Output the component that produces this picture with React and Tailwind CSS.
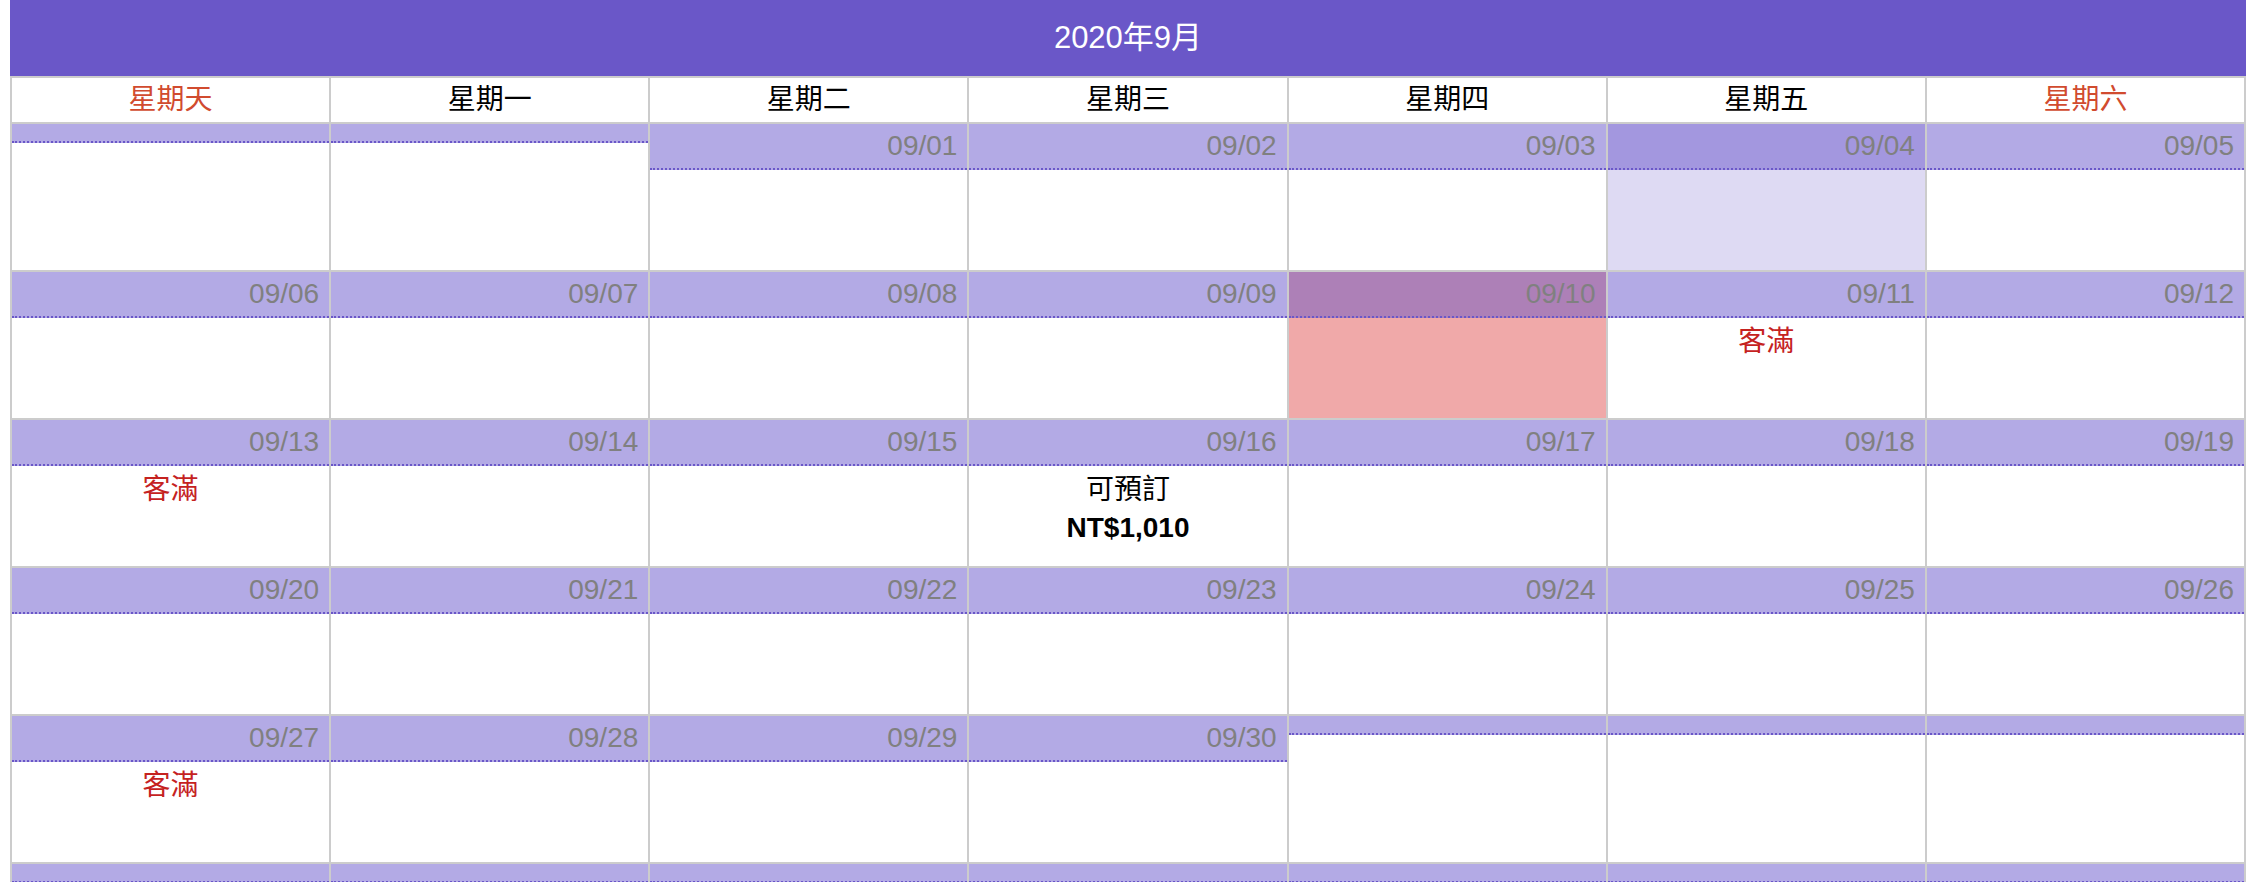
import React from "react";

const WEEKDAYS = ["星期天", "星期一", "星期二", "星期三", "星期四", "星期五", "星期六"];

// special days in the month
const DAY_INFO = {
  4: { band: "bg-[#a397df]", body: "bg-[#dedaf3]" },
  10: { band: "bg-[#ad80b7]", body: "bg-[#f0a9a9]" },
  11: { status: "full" },
  13: { status: "full" },
  16: { status: "open", price: "NT$1,010" },
  27: { status: "full" },
};

const buildCells = () => {
  const cells = [];
  for (let i = 0; i < 2; i++) cells.push(null);
  for (let d = 1; d <= 30; d++) cells.push(d);
  while (cells.length < 42) cells.push(null);
  return cells;
};

const DayCell = ({ day }) => {
  if (day === null) {
    return (
      <div className="flex flex-col bg-white h-[146px]">
        <div className="h-[17px] bg-[#b3aae5] border-b-2 border-dotted border-b-[#6a57c8] box-content" />
        <div className="flex-1 bg-white" />
      </div>
    );
  }
  const info = DAY_INFO[day] || {};
  const label = `09/${String(day).padStart(2, "0")}`;
  return (
    <div className="flex flex-col bg-white h-[146px]">
      <div
        className={`h-[44px] box-content border-b-2 border-dotted border-b-[#6a57c8] flex items-center justify-end pr-[10px] text-[28px] text-[#808080] ${
          info.band || "bg-[#b3aae5]"
        }`}
      >
        {label}
      </div>
      <div className={`flex-1 flex flex-col items-center pt-[5px] text-[28px] leading-[38px] ${info.body || "bg-white"}`}>
        {info.status === "full" && <span className="text-[#c5221f]">客滿</span>}
        {info.status === "open" && (
          <>
            <span className="text-black">可預訂</span>
            <span className="text-black font-bold">{info.price}</span>
          </>
        )}
      </div>
    </div>
  );
};

export default function App() {
  const cells = buildCells();
  return (
    <div
      className="bg-white h-[882px] overflow-hidden"
      style={{ fontFamily: '"Liberation Sans", Arial, "Noto Sans CJK TC", sans-serif' }}
    >
      <div className="ml-[10px] w-[2236px]">
        <div className="h-[76px] bg-[#6a57c8] flex items-center justify-center text-white text-[31px]">
          2020年9月
        </div>
        <div className="grid grid-cols-7 gap-[2px] bg-[#cccccc] border-2 border-[#cccccc]">
          {WEEKDAYS.map((w, i) => (
            <div
              key={w}
              className={`h-[44px] bg-white flex items-center justify-center text-[28px] ${
                i === 0 || i === 6 ? "text-[#d14b2f]" : "text-black"
              }`}
            >
              {w}
            </div>
          ))}
          {cells.map((d, i) => (
            <DayCell key={i} day={d} />
          ))}
        </div>
      </div>
    </div>
  );
}
